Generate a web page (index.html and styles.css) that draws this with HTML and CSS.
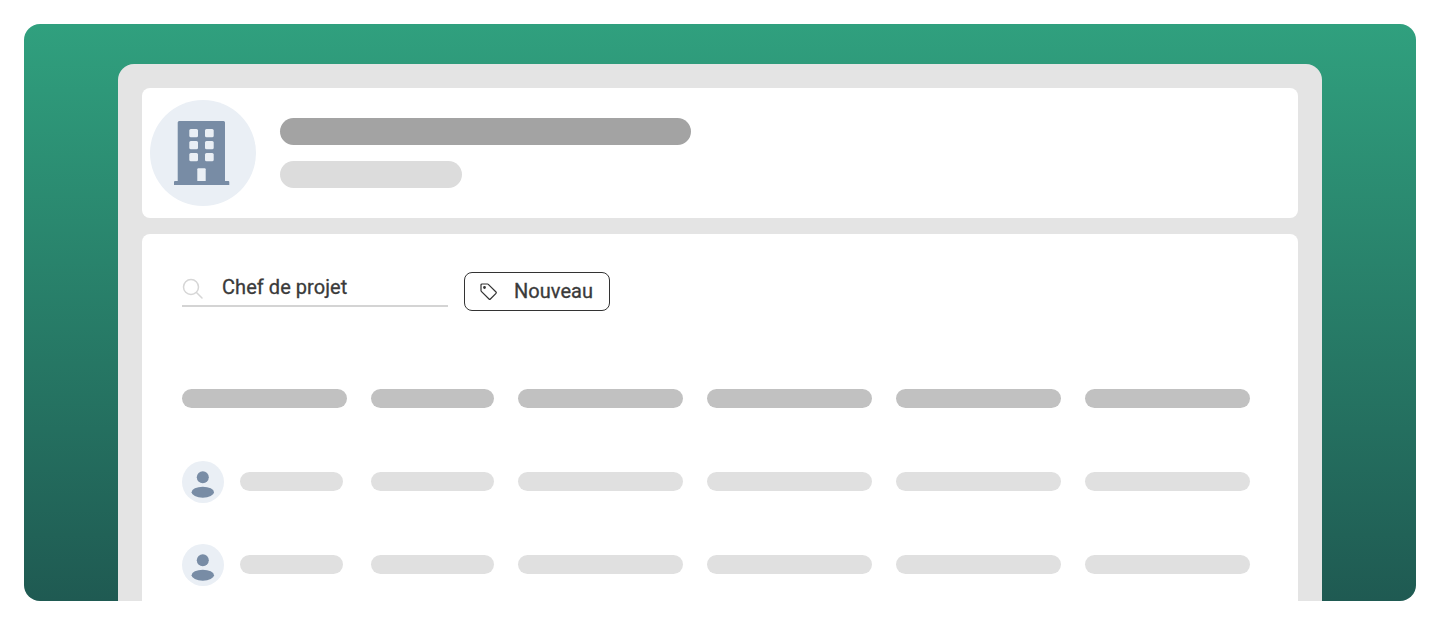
FILE: index.html
```html
<!DOCTYPE html>
<html lang="fr">
<head>
<meta charset="utf-8">
<title>Annuaire</title>
<link rel="stylesheet" href="styles.css">
</head>
<body>
<section class="hero">
  <div class="frame">
    <header class="card company">
      <div class="company-logo">
        <svg width="58" height="64" viewBox="0 0 58 64"><path fill="#788ca5" d="M3.700 1.500A1.500 1.500 0 0 1 5.200 0H49.500A1.500 1.500 0 0 1 51 1.500V60H54.300a1 1 0 0 1 1 1V64H0V61a1 1 0 0 1 1-1H3.700z"/><g fill="#eaeff5"><rect x="15.300" y="8" width="8.700" height="8.300" rx="1.500"/><rect x="31" y="8" width="8.700" height="8.300" rx="1.500"/><rect x="15.300" y="20" width="8.700" height="8.300" rx="1.500"/><rect x="31" y="20" width="8.700" height="8.300" rx="1.500"/><rect x="15.300" y="32" width="8.700" height="8.300" rx="1.500"/><rect x="31" y="32" width="8.700" height="8.300" rx="1.500"/><path d="M23.300 48.300a1 1 0 0 1 1-1H30.700a1 1 0 0 1 1 1V60H23.300z"/></g></svg>
      </div>
      <div class="company-lines">
        <div class="pill pill-title"></div>
        <div class="pill pill-sub"></div>
      </div>
    </header>
    <main class="card content">
      <div class="toolbar">
        <div class="search">
          <svg class="search-icon" width="22" height="22" viewBox="0 0 22 22" fill="none" stroke="#d6d6d6" stroke-width="1.500"><circle cx="9" cy="9" r="7.500"/><path d="M14.500 14.500L20 20" stroke-linecap="round"/></svg>
          <span class="search-text">Chef de projet</span>
        </div>
        <button class="tag">
          <svg width="18" height="18" viewBox="0 0 18 18" fill="none" stroke="#333" stroke-width="1.200" stroke-linejoin="round"><path d="M1 2a1 1 0 0 1 1-1h5.600a1 1 0 0 1 .7.300l7.700 7.700a1 1 0 0 1 0 1.400l-5.600 5.600a1 1 0 0 1-1.400 0L1.300 8.300a1 1 0 0 1-.3-.7z"/><circle cx="4.500" cy="4.500" r=".8" fill="#333"/></svg>
          <span class="tag-text">Nouveau</span>
        </button>
      </div>
      <div class="table">
        <div class="row row-head">
          <div class="pill cell-head"></div>
          <div class="pill cell-head"></div>
          <div class="pill cell-head"></div>
          <div class="pill cell-head"></div>
          <div class="pill cell-head"></div>
          <div class="pill cell-head"></div>
        </div>
        <div class="row">
          <div class="person">
            <div class="avatar"><svg width="42" height="42" viewBox="0 0 42 42"><circle cx="20.800" cy="16.300" r="6" fill="#788ca5"/><ellipse cx="20.800" cy="31.200" rx="11.200" ry="5.500" fill="#788ca5"/></svg></div>
            <div class="pill cell"></div>
          </div>
          <div class="pill cell"></div>
          <div class="pill cell"></div>
          <div class="pill cell"></div>
          <div class="pill cell"></div>
          <div class="pill cell"></div>
        </div>
        <div class="row">
          <div class="person">
            <div class="avatar"><svg width="42" height="42" viewBox="0 0 42 42"><circle cx="20.800" cy="16.300" r="6" fill="#788ca5"/><ellipse cx="20.800" cy="31.200" rx="11.200" ry="5.500" fill="#788ca5"/></svg></div>
            <div class="pill cell"></div>
          </div>
          <div class="pill cell"></div>
          <div class="pill cell"></div>
          <div class="pill cell"></div>
          <div class="pill cell"></div>
          <div class="pill cell"></div>
        </div>
      </div>
    </main>
  </div>
</section>
</body>
</html>
```
FILE: styles.css
```css
* { box-sizing: border-box; }
html, body { height: 100%; }
body {
  margin: 0;
  padding: 24px;
  background: #fff;
  overflow: hidden;
  font-family: Roboto, "Liberation Sans", sans-serif;
  color: #3a3a3a;
}
.hero {
  height: 577px;
  padding: 40px 94px 0;
  border-radius: 16px;
  overflow: hidden;
  background: linear-gradient(180deg, #30a07e 0%, #1f5a52 100%);
}
.frame {
  height: 600px;
  padding: 24px;
  background: #e4e4e4;
  border-radius: 16px 16px 0 0;
}
.card { background: #fff; border-radius: 8px; }
.company {
  height: 130px;
  display: flex;
  align-items: center;
  gap: 24px;
  padding-left: 8px;
}
.company-logo {
  width: 106px;
  height: 106px;
  border-radius: 50%;
  background: #eaeff5;
  display: flex;
  align-items: center;
  justify-content: center;
}
.company-lines { display: flex; flex-direction: column; gap: 16px; }
.pill { border-radius: 999px; }
.pill-title { width: 411px; height: 27px; background: #a3a3a3; }
.pill-sub { width: 182px; height: 27px; background: #dcdcdc; }
.content { margin-top: 16px; height: 500px; padding: 38px 40px 0; }
.toolbar { display: flex; gap: 16px; align-items: flex-start; }
.search {
  width: 266px;
  height: 35px;
  display: flex;
  align-items: center;
  gap: 18px;
  border-bottom: 2px solid #d4d4d4;
}
.search-icon { flex: none; margin-top: 1px; }
.search-text {
  font-size: 20px;
  font-weight: 450;
  letter-spacing: 0.05px;
  line-height: 28px;
  margin-top: -4px;
  -webkit-text-stroke: 0.3px #3a3a3a;
}
.tag {
  width: 146px;
  height: 39px;
  display: flex;
  align-items: center;
  gap: 16px;
  padding: 0 0 0 15px;
  border: 1px solid #333;
  border-radius: 8px;
  background: #fff;
  color: #3a3a3a;
  font: 450 20px/28px Roboto, "Liberation Sans", sans-serif;
  letter-spacing: 0.05px;
}
.tag-text { margin-top: -1px; -webkit-text-stroke: 0.3px #3a3a3a; }
.table { margin-top: 78px; }
.row {
  display: grid;
  grid-template-columns: 165px 123px 165px 165px 165px 165px;
  column-gap: 24px;
  align-items: start;
  height: 42px;
  margin-bottom: 41px;
}
.row-head { height: 19px; margin-bottom: 53px; }
.cell-head { height: 19px; background: #c1c1c1; }
.cell { height: 19px; margin-top: 11px; background: #e0e0e0; }
.person { display: flex; align-items: flex-start; gap: 16px; }
.person .cell { width: 103px; }
.avatar {
  width: 42px;
  height: 42px;
  border-radius: 50%;
  background: #eaeff5;
}
```
